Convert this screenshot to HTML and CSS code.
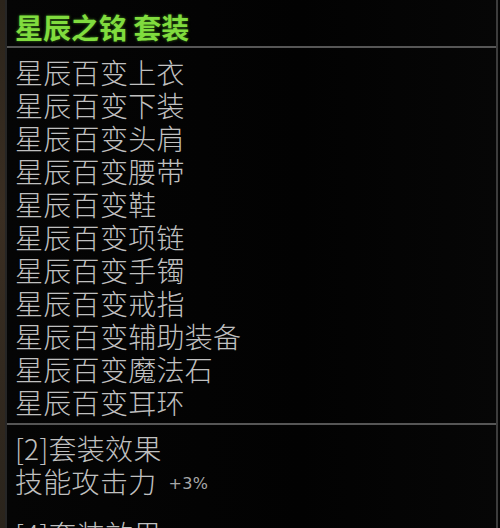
FILE: index.html
```html
<!DOCTYPE html>
<html lang="zh">
<head>
<meta charset="utf-8">
<link rel="stylesheet" href="styles.css">
</head>
<body>
<div class="frame">
  <div class="edge"></div>
  <div class="panel">
    <div class="title">星辰之铭 套装</div>
    <div class="sep"></div>
    <ul class="items">
      <li>星辰百变上衣</li>
      <li>星辰百变下装</li>
      <li>星辰百变头肩</li>
      <li>星辰百变腰带</li>
      <li>星辰百变鞋</li>
      <li>星辰百变项链</li>
      <li>星辰百变手镯</li>
      <li>星辰百变戒指</li>
      <li>星辰百变辅助装备</li>
      <li>星辰百变魔法石</li>
      <li>星辰百变耳环</li>
    </ul>
    <div class="sep"></div>
    <div class="effect">
      <div class="line">[2]套装效果</div>
      <div class="line">技能攻击力<span class="val">+3%</span></div>
    </div>
    <div class="effect next">
      <div class="line">[4]套装效果</div>
    </div>
  </div>
  <div class="rim"></div>
</div>
</body>
</html>
```
FILE: styles.css
```css
html, body {
  margin: 0;
  padding: 0;
  background: #000;
  height: 100%;
  overflow: hidden;
}
.frame {
  display: flex;
  width: 500px;
  height: 528px;
  background: #030303;
}
.edge {
  width: 5px;
  flex: none;
  background: linear-gradient(180deg, #2b241b, #3a2e22 40%, #2a241c);
  border-right: 2px solid #262626;
}
.panel {
  flex: 1;
  display: flex;
  flex-direction: column;
  min-width: 0;
  background: linear-gradient(90deg, #050505, #020202 60%, #060606);
  font-family: "Noto Sans CJK SC", "Noto Sans", sans-serif;
  color: #c0c0c0;
  overflow: hidden;
}
.rim {
  width: 2px;
  flex: none;
  background: #3c3c3c;
  border-right: 2px solid #050505;
}
.title {
  padding: 10px 0 2px 8px;
  font-size: 28px;
  line-height: 34px;
  font-weight: 700;
  color: #80dc3e;
  text-shadow: 0 0 3px rgba(90, 200, 40, 0.6);
  white-space: nowrap;
}
.sep {
  height: 2px;
  background: #565656;
  flex: none;
}
.items {
  list-style: none;
  margin: 0;
  padding: 8px 0 4px 8px;
}
.items li, .effect .line {
  font-size: 28px;
  line-height: 33px;
  height: 33px;
  font-weight: 300;
  white-space: nowrap;
  letter-spacing: 0.3px;
}
.effect {
  padding: 7px 0 0 8px;
}
.effect.next {
  padding-top: 20px;
}
.val {
  font-family: "DejaVu Sans", sans-serif;
  font-size: 16px;
  font-weight: 400;
  color: #a8a8a8;
  margin-left: 12px;
  vertical-align: 4px;
}
```
